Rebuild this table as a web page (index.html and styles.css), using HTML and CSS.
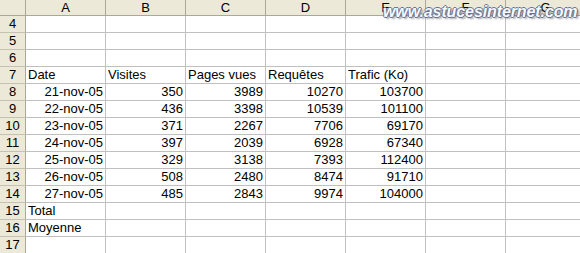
FILE: index.html
```html
<!DOCTYPE html>
<html>
<head>
<meta charset="utf-8">
<link rel="stylesheet" href="styles.css">
</head>
<body>
<div class="sheet">
  <table class="grid">
    <tr class="hdr">
      <th class="corner"></th><th>A</th><th>B</th><th>C</th><th>D</th><th>E</th><th>F</th><th>G</th>
    </tr>
    <tr><th class="rn">4</th><td></td><td></td><td></td><td></td><td></td><td></td><td></td></tr>
    <tr><th class="rn">5</th><td></td><td></td><td></td><td></td><td></td><td></td><td></td></tr>
    <tr><th class="rn">6</th><td></td><td></td><td></td><td></td><td></td><td></td><td></td></tr>
    <tr><th class="rn">7</th><td>Date</td><td>Visites</td><td>Pages vues</td><td>Requêtes</td><td>Trafic (Ko)</td><td></td><td></td></tr>
    <tr><th class="rn">8</th><td class="n">21-nov-05</td><td class="n">350</td><td class="n">3989</td><td class="n">10270</td><td class="n">103700</td><td></td><td></td></tr>
    <tr><th class="rn">9</th><td class="n">22-nov-05</td><td class="n">436</td><td class="n">3398</td><td class="n">10539</td><td class="n">101100</td><td></td><td></td></tr>
    <tr><th class="rn">10</th><td class="n">23-nov-05</td><td class="n">371</td><td class="n">2267</td><td class="n">7706</td><td class="n">69170</td><td></td><td></td></tr>
    <tr><th class="rn">11</th><td class="n">24-nov-05</td><td class="n">397</td><td class="n">2039</td><td class="n">6928</td><td class="n">67340</td><td></td><td></td></tr>
    <tr><th class="rn">12</th><td class="n">25-nov-05</td><td class="n">329</td><td class="n">3138</td><td class="n">7393</td><td class="n">112400</td><td></td><td></td></tr>
    <tr><th class="rn">13</th><td class="n">26-nov-05</td><td class="n">508</td><td class="n">2480</td><td class="n">8474</td><td class="n">91710</td><td></td><td></td></tr>
    <tr><th class="rn">14</th><td class="n">27-nov-05</td><td class="n">485</td><td class="n">2843</td><td class="n">9974</td><td class="n">104000</td><td></td><td></td></tr>
    <tr><th class="rn">15</th><td>Total</td><td></td><td></td><td></td><td></td><td></td><td></td></tr>
    <tr><th class="rn">16</th><td>Moyenne</td><td></td><td></td><td></td><td></td><td></td><td></td></tr>
    <tr><th class="rn">17</th><td></td><td></td><td></td><td></td><td></td><td></td><td></td></tr>
  </table>
  <div class="watermark">www.astucesinternet.com</div>
</div>
</body>
</html>
```
FILE: styles.css
```css
html, body {
  margin: 0;
  padding: 0;
  background: #ffffff;
  overflow: hidden;
}
.sheet {
  position: relative;
  width: 580px;
  height: 253px;
  overflow: hidden;
  font-family: "Liberation Sans", Arial, sans-serif;
  font-size: 13px;
  color: #000;
}
.grid {
  border-collapse: separate;
  border-spacing: 0;
  table-layout: fixed;
  width: 585px;
}
.grid th, .grid td {
  padding: 0 2px;
  line-height: 16px;
  white-space: nowrap;
  overflow: hidden;
  font-weight: normal;
  box-sizing: border-box;
  border-right: 1px solid #c0c0c0;
  border-bottom: 1px solid #c0c0c0;
  width: 80px;
  height: 17px;
}
.grid td {
  text-align: left;
}
.grid td.n {
  text-align: right;
}
.grid .hdr th {
  background: #ece9d8;
  height: 16px;
  line-height: 15px;
  text-align: center;
  border-right: 1px solid #aca899;
  border-bottom: 1px solid #aca899;
  padding: 0;
}
.grid th.corner {
  width: 26px;
}
.grid th.rn {
  background: #ece9d8;
  width: 26px;
  text-align: center;
  padding: 0;
  border-right: 1px solid #aca899;
  border-bottom: 1px solid #c5c2b2;
}
.watermark {
  position: absolute;
  left: 383px;
  top: 3px;
  font-family: "Liberation Sans", Arial, sans-serif;
  font-size: 16px;
  font-weight: bold;
  font-style: italic;
  color: #f8f9fc;
  letter-spacing: -0.1px;
  text-shadow:
    1px 0 0 #66738f,
    -1px 0 0 #66738f,
    0 1px 0 #66738f,
    0 -1px 0 #66738f,
    2px 2px 2px rgba(100, 100, 100, 0.6);
}
```
